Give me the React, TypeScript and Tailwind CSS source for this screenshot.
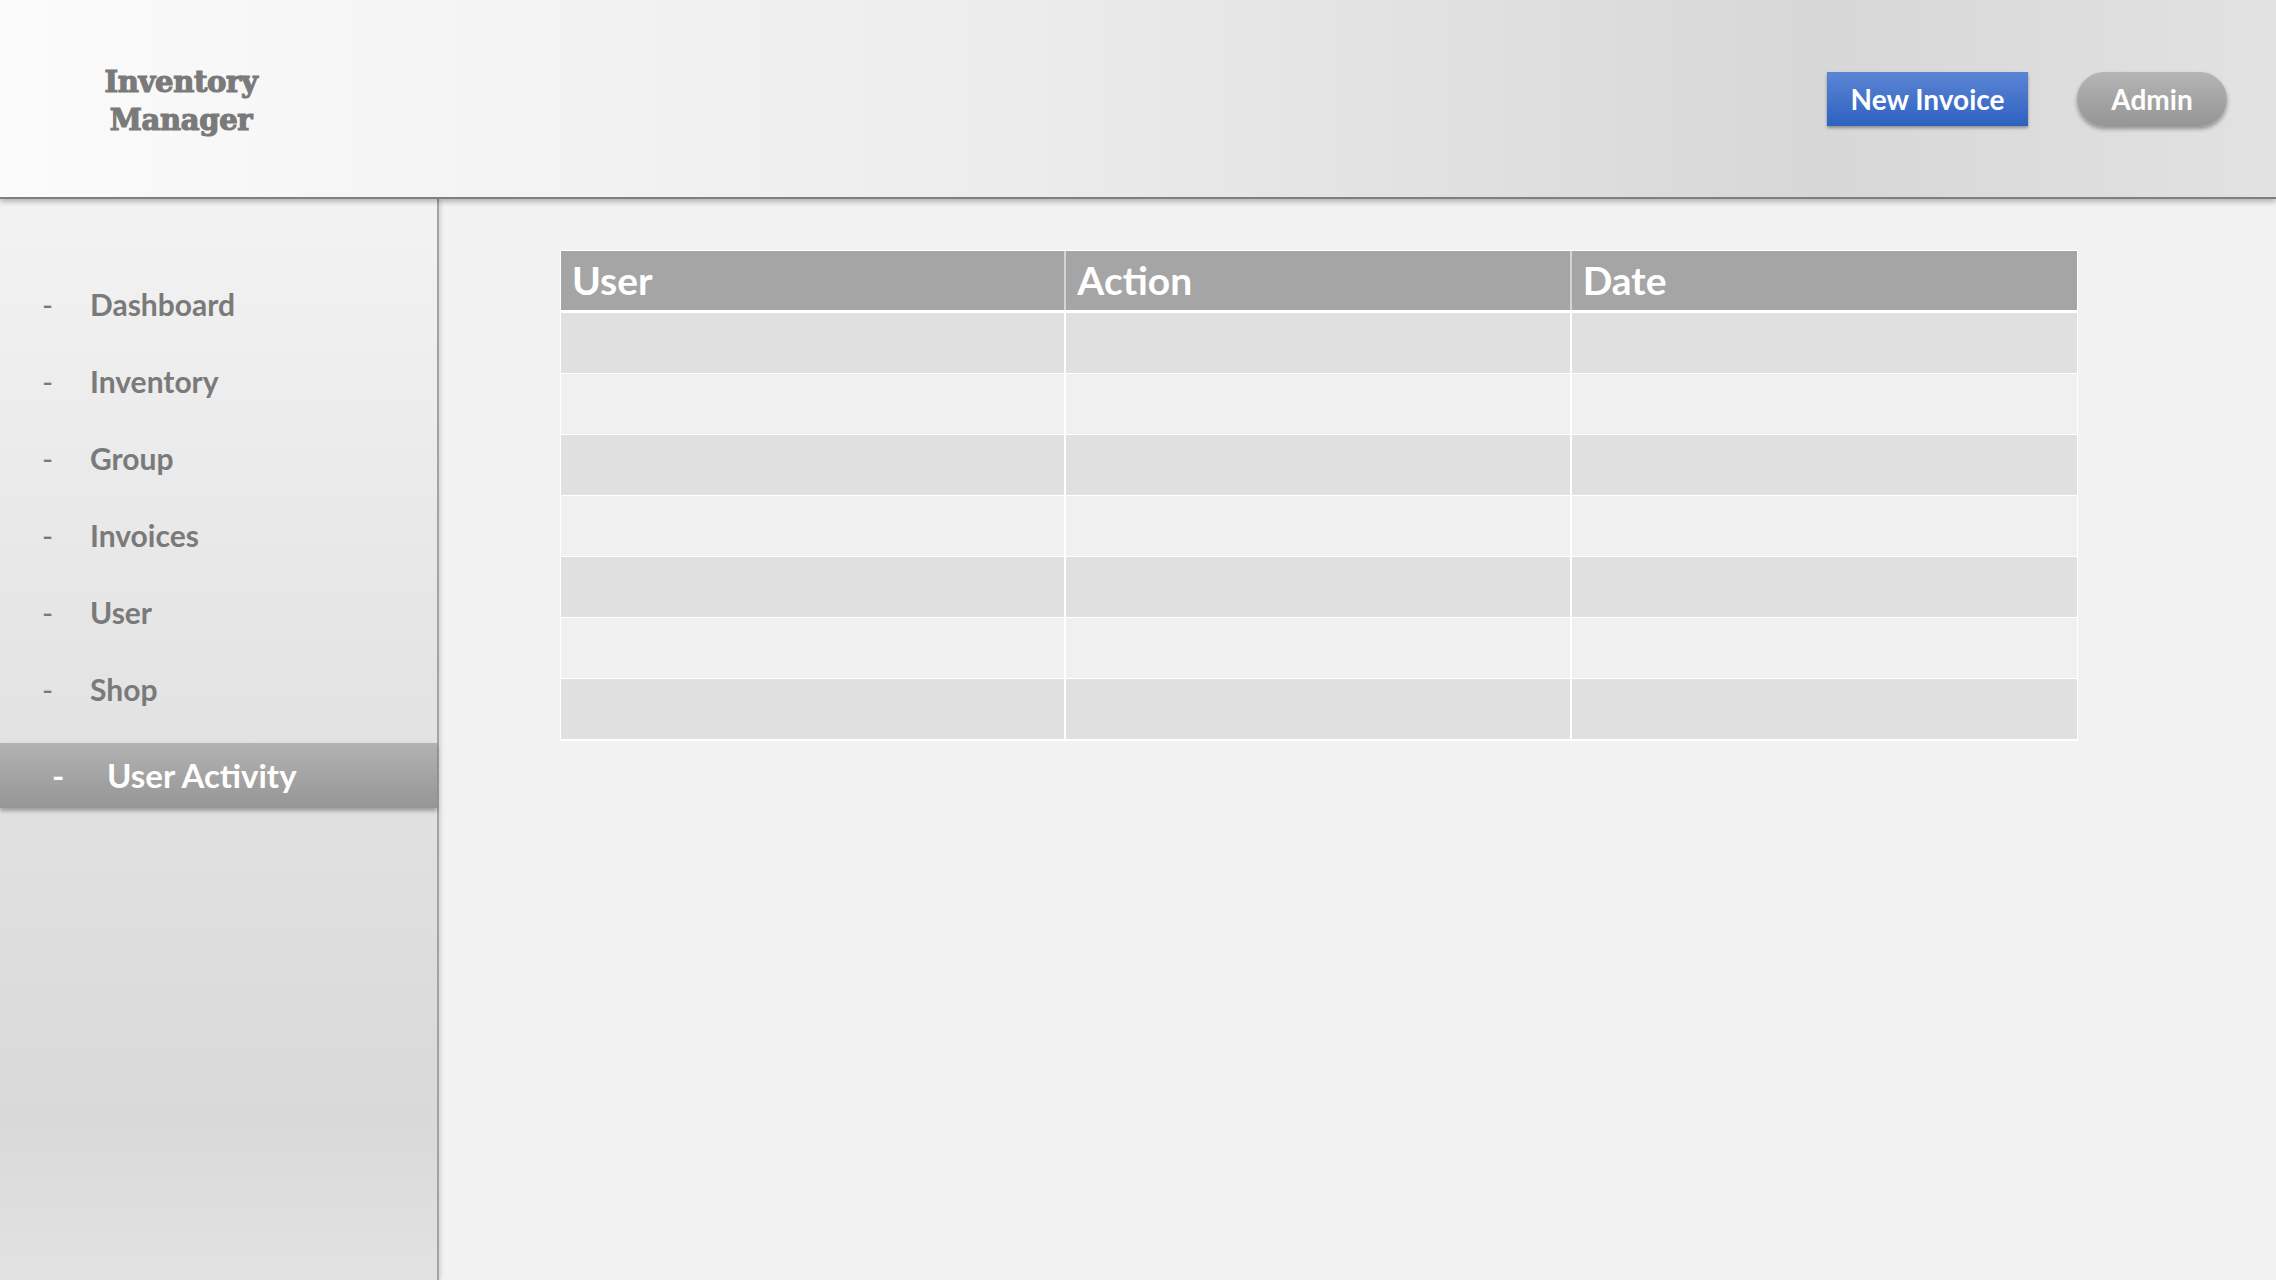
import React from 'react';

const navItems = ['Dashboard', 'Inventory', 'Group', 'Invoices', 'User', 'Shop'];
const columns = ['User', 'Action', 'Date'];
const rows = [0, 1, 2, 3, 4, 5, 6];

const App = () => {
  return (
    <div className="h-[1280px] w-full flex flex-col overflow-hidden bg-[#f2f2f2] font-['Lato',sans-serif]">
      <header className="relative z-20 h-[199px] shrink-0 flex items-center justify-between border-b-2 border-[#7f7f7f] bg-[linear-gradient(90deg,#fbfbfb_0%,#ececec_45%,#d7d7d7_80%,#e2e2e2_100%)] shadow-[0_3px_5px_rgba(0,0,0,0.25)]">
        <div className="ml-[81px] w-[200px] mt-1 text-center font-['DejaVu_Serif',serif] font-bold text-[29px] leading-[38px] text-[#7a7a7a] tracking-[-0.3px] [-webkit-text-stroke:1.2px_#7a7a7a]">
          <div>Inventory</div>
          <div>Manager</div>
        </div>
        <div className="flex items-center gap-[49px] mr-[49px]">
          <button className="h-[54px] w-[201px] bg-[linear-gradient(180deg,#5c85d4_0%,#2d61c1_100%)] text-white font-bold text-[28px] leading-none shadow-[0_2px_3px_rgba(0,0,0,0.35)]">
            New Invoice
          </button>
          <button className="h-[54px] w-[150px] rounded-full bg-[linear-gradient(180deg,#b5b5b5_0%,#959595_100%)] text-white font-bold text-[28px] leading-none shadow-[0_3px_4px_rgba(0,0,0,0.35)]">
            Admin
          </button>
        </div>
      </header>

      <div className="flex flex-1 min-h-0">
        <aside className="relative z-10 w-[439px] shrink-0 border-r-2 border-[#a3a3a3] bg-[linear-gradient(180deg,#f3f3f3_0%,#e4e4e4_45%,#d9d9d9_85%,#e2e2e2_100%)] shadow-[2px_0_4px_rgba(0,0,0,0.12)] pt-[67px]">
          <nav className="flex flex-col">
            {navItems.map((item) => (
              <div key={item} className="flex items-center h-[77px] text-[30px] leading-[77px] text-[#7a7a7a]">
                <span className="w-[90px] pl-[42px] font-normal">-</span>
                <span className="font-bold">{item}</span>
              </div>
            ))}
          </nav>
          <div className="mt-[15px] flex items-center h-[65px] text-[33px] leading-[65px] text-white font-bold bg-[linear-gradient(180deg,#b2b2b2_0%,#969696_100%)] shadow-[0_3px_4px_rgba(0,0,0,0.3)]">
            <span className="w-[107px] pl-[52px]">-</span>
            <span>User Activity</span>
          </div>
        </aside>

        <main className="flex-1 pl-[122px] pt-[52px]">
          <div className="w-[1516px] outline outline-1 outline-white">
            <div className="grid grid-cols-3 h-[62px] bg-[#a5a5a5] border-b-[3px] border-white">
              {columns.map((col, i) => (
                <div
                  key={col}
                  className={`flex items-center pl-[11px] text-[39px] font-bold text-white ${i < 2 ? 'border-r-2 border-[#d4d4d4]' : ''}`}
                >
                  {col}
                </div>
              ))}
            </div>
            {rows.map((r) => (
              <div
                key={r}
                className={`grid grid-cols-3 h-[61px] border-b border-white ${r % 2 === 0 ? 'bg-[#e0e0e0]' : 'bg-[#f0f0f0]'}`}
              >
                {columns.map((col, i) => (
                  <div key={col} className={i < 2 ? 'border-r-2 border-white' : ''} />
                ))}
              </div>
            ))}
          </div>
        </main>
      </div>
    </div>
  );
};

export default App;
